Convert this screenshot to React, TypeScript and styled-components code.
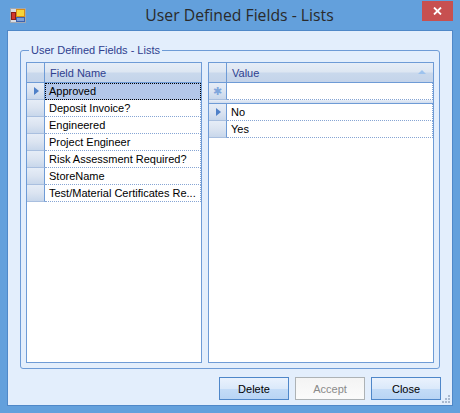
import React from 'react';
import styled, { createGlobalStyle } from 'styled-components';

const Global = createGlobalStyle`
  html, body { margin: 0; padding: 0; background: #63a0dc; }
  #root { width: 460px; height: 413px; }
`;

const FRAME = '#63a0dc';
const LINE = '#6e9bd6';

const Frame = styled.div`
  width: 460px;
  height: 413px;
  box-sizing: border-box;
  background: ${FRAME};
  display: flex;
  flex-direction: column;
  padding: 0 7px 7px 7px;
  font-family: "Liberation Sans", Arial, sans-serif;
`;

const TitleBar = styled.div`
  height: 30px;
  display: flex;
  align-items: flex-start;
  margin: 0 -7px;
`;

const AppIcon = styled.svg`
  width: 16px;
  height: 16px;
  margin: 8px 0 0 10px;
  flex: none;
`;

const Title = styled.div`
  flex: 1;
  text-align: center;
  font-family: "Open Sans", "Noto Sans", sans-serif;
  font-size: 15.75px;
  line-height: 30px;
  color: #2a2a2a;
  padding-left: 31px;
  white-space: nowrap;
`;

const CloseBtn = styled.div`
  width: 31px;
  height: 20px;
  margin: 1px 7px 0 0;
  background: #c75050;
  display: flex;
  align-items: center;
  justify-content: center;
  flex: none;
`;

const Client = styled.div`
  flex: 1;
  position: relative;
  background: #e3eefc;
  border: 1px solid #4f88c8;
  display: flex;
  flex-direction: column;
`;

const Group = styled.fieldset`
  flex: 1;
  margin: 12px 12px 0 12px;
  padding: 5px;
  border: 1px solid ${LINE};
  border-radius: 3px;
  display: flex;
  gap: 6px;
  min-width: 0;
  min-height: 0;
`;

const GroupLabel = styled.legend`
  margin-left: 3px;
  padding: 0 2px;
  font-size: 11px;
  line-height: 14px;
  color: #2f3f8f;
`;

const Grid = styled.div<{ $width?: number }>`
  box-sizing: border-box;
  ${p => (p.$width ? `width:${p.$width}px; flex:none;` : 'flex:1;')}
  border: 1px solid ${LINE};
  background: #fff;
  display: flex;
  flex-direction: column;
  min-width: 0;
`;

const headGrad = 'linear-gradient(#e6edf7 0%, #dde6f2 48%, #c9d8ec 52%, #c4d4ea 100%)';

const HeaderRow = styled.div`
  display: flex;
  height: 20px;
  box-sizing: border-box;
  border-bottom: 1px solid ${LINE};
  background: ${headGrad};
`;

const Corner = styled.div`
  width: 18px;
  flex: none;
  box-sizing: border-box;
  border-right: 1px solid ${LINE};
`;

const ColHead = styled.div`
  flex: 1;
  display: flex;
  align-items: center;
  justify-content: space-between;
  padding: 0 7px 0 5px;
  font-size: 11px;
  color: #2f3f8f;
`;

const SortArrow = styled.span`
  width: 0;
  height: 0;
  border-left: 4px solid transparent;
  border-right: 4px solid transparent;
  border-bottom: 4px solid #9ec3ee;
  margin-bottom: 2px;
`;

const Row = styled.div<{ $h?: number }>`
  display: flex;
  height: ${p => p.$h ?? 17}px;
  flex: none;
`;

const RowHead = styled.div`
  width: 18px;
  flex: none;
  box-sizing: border-box;
  border-right: 1px solid ${LINE};
  border-bottom: 1px solid #a9bfdf;
  background: linear-gradient(#e6edf7 0%, #dbe4f1 50%, #c8d7eb 100%);
  display: flex;
  align-items: center;
  justify-content: center;
`;

const Cell = styled.div<{ $sel?: boolean }>`
  flex: 1;
  min-width: 0;
  box-sizing: border-box;
  border-bottom: 1px dotted #86a5d4;
  border-right: 1px dotted #86a5d4;
  padding-left: 4px;
  font-size: 11px;
  line-height: 16px;
  color: #000;
  white-space: nowrap;
  overflow: hidden;
  background: ${p => (p.$sel ? '#b3c7e9' : '#fff')};
  outline: ${p => (p.$sel ? '1px dotted #000' : 'none')};
  outline-offset: -1px;
`;

const Separator = styled.div`
  height: 4px;
  flex: none;
  box-sizing: border-box;
  border-bottom: 1px solid ${LINE};
  background: linear-gradient(#e8eef7, #cfdcee);
`;

const Arrow = styled.span`
  width: 0;
  height: 0;
  border-top: 4px solid transparent;
  border-bottom: 4px solid transparent;
  border-left: 5px solid #4f80c8;
  margin-left: 1px;
`;

const Star = styled.span`
  font-size: 11px;
  color: #7fa6dc;
  line-height: 1;
`;

const ButtonRow = styled.div`
  display: flex;
  justify-content: flex-end;
  gap: 6px;
  padding: 8px 11px 5px 0;
`;

const Button = styled.button<{ $disabled?: boolean }>`
  width: 70px;
  height: 23px;
  padding: 0;
  font-family: "Liberation Sans", Arial, sans-serif;
  font-size: 11px;
  border: 1px solid ${p => (p.$disabled ? '#adb2b5' : '#4f87c9')};
  color: ${p => (p.$disabled ? '#8a8a8a' : '#000')};
  background: ${p =>
    p.$disabled
      ? 'linear-gradient(#f4f4f4, #fbfbfb)'
      : 'linear-gradient(#eaf2fd 0%, #dbe9fa 50%, #c4dcf7 51%, #b8d4f4 100%)'};
`;

const Grip = styled.svg`
  position: absolute;
  right: 2px;
  bottom: 2px;
  width: 8px;
  height: 8px;
`;

const leftRows = [
  'Approved',
  'Deposit Invoice?',
  'Engineered',
  'Project Engineer',
  'Risk Assessment Required?',
  'StoreName',
  'Test/Material Certificates Re...',
];

export default function App() {
  return (
    <>
      <Global />
      <Frame>
        <TitleBar>
          <AppIcon viewBox="0 0 16 16">
            <rect x="0.5" y="0.5" width="15" height="14" fill="#d9dde3" stroke="#a0a8b3" />
            <rect x="1.5" y="4.5" width="4" height="7" fill="#d2362b" stroke="#8c1c15" />
            <rect x="6.5" y="1.5" width="8" height="7" fill="#f7d43a" stroke="#d98c16" />
            <rect x="6.5" y="9.5" width="8" height="4" fill="#7d9fd8" stroke="#3c63b0" />
          </AppIcon>
          <Title>User Defined Fields - Lists</Title>
          <CloseBtn>
            <svg width="9" height="8" viewBox="0 0 9 8">
              <path d="M1 0.5 L8 7.5 M8 0.5 L1 7.5" stroke="#fff" strokeWidth="1.8" />
            </svg>
          </CloseBtn>
        </TitleBar>
        <Client>
          <Group>
            <GroupLabel>User Defined Fields - Lists</GroupLabel>
            <Grid $width={176}>
              <HeaderRow>
                <Corner />
                <ColHead>Field Name</ColHead>
              </HeaderRow>
              {leftRows.map((r, i) => (
                <Row key={r}>
                  <RowHead>{i === 0 && <Arrow />}</RowHead>
                  <Cell $sel={i === 0}>{r}</Cell>
                </Row>
              ))}
            </Grid>
            <Grid>
              <HeaderRow>
                <Corner />
                <ColHead>
                  Value
                  <SortArrow />
                </ColHead>
              </HeaderRow>
              <Row>
                <RowHead>
                  <Star>✱</Star>
                </RowHead>
                <Cell />
              </Row>
              <Separator />
              <Row>
                <RowHead>
                  <Arrow />
                </RowHead>
                <Cell>No</Cell>
              </Row>
              <Row>
                <RowHead />
                <Cell>Yes</Cell>
              </Row>
            </Grid>
          </Group>
          <ButtonRow>
            <Button>Delete</Button>
            <Button $disabled>Accept</Button>
            <Button>Close</Button>
          </ButtonRow>
          <Grip viewBox="0 0 8 8">
            {[
              [6, 0],
              [6, 3],
              [3, 3],
              [6, 6],
              [3, 6],
              [0, 6],
            ].map(([x, y]) => (
              <rect key={`${x}-${y}`} x={x} y={y} width="2" height="2" fill="#a9b9cf" />
            ))}
          </Grip>
        </Client>
      </Frame>
    </>
  );
}
